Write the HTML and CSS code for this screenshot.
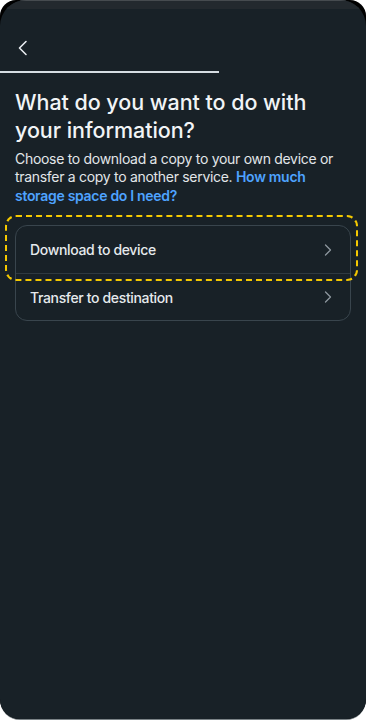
FILE: index.html
```html
<!DOCTYPE html>
<html lang="en">
<head>
<meta charset="utf-8">
<title>What do you want to do with your information?</title>
<link rel="stylesheet" href="styles.css">
</head>
<body>
<div class="phone">
  <div class="screen">
    <div class="statusbar"></div>
    <div class="topbar">
      <button class="back" aria-label="Back">
        <svg width="12" height="16" viewBox="0 0 12 16"><path d="M9 1.5 L2.5 8 L9 14.5" fill="none" stroke="#e8ecef" stroke-width="1.6" stroke-linecap="round" stroke-linejoin="round"/></svg>
      </button>
    </div>
    <div class="progress"></div>
    <main class="content">
      <h1 class="title">What do you want to do with your information?</h1>
      <p class="desc">Choose to download a copy to your own device or transfer a copy to another service. <a class="link" href="#">How much storage space do I need?</a></p>
      <div class="options-wrap">
        <div class="focus-ring"></div>
        <ul class="options">
          <li class="option">
            <span>Download to device</span>
            <svg class="chev" width="8" height="12" viewBox="0 0 8 12"><path d="M1.5 1 L6.5 6 L1.5 11" fill="none" stroke="#8d979e" stroke-width="1.3" stroke-linecap="round" stroke-linejoin="round"/></svg>
          </li>
          <li class="option">
            <span>Transfer to destination</span>
            <svg class="chev" width="8" height="12" viewBox="0 0 8 12"><path d="M1.5 1 L6.5 6 L1.5 11" fill="none" stroke="#8d979e" stroke-width="1.3" stroke-linecap="round" stroke-linejoin="round"/></svg>
          </li>
        </ul>
      </div>
    </main>
  </div>
</div>
</body>
</html>
```
FILE: styles.css
```css
* { box-sizing: border-box; }
html, body { margin: 0; padding: 0; background: #ffffff; }
body { width: 366px; height: 720px; overflow: hidden; font-family: Inter, "Noto Sans", sans-serif; }

.phone {
  width: 366px;
  height: 719px;
  background: #000;
  border-radius: 16px 16px 20px 20px;
  box-shadow: 0 1px 0 #7b8387;
}
.screen {
  height: 719px;
  background: #182127;
  border-radius: 26px 26px 20px 20px;
  overflow: hidden;
  display: flex;
  flex-direction: column;
}
.statusbar {
  height: 9px;
  flex: none;
  background: #23292e;
  border-top: 1px solid #464b4f;
}
.topbar {
  height: 62px;
  display: flex;
  align-items: center;
  padding-left: 16px;
  padding-top: 15px;
}
.back {
  background: none;
  border: 0;
  padding: 0;
  width: 14px;
  height: 16px;
  display: flex;
  align-items: center;
  justify-content: center;
}
.progress {
  width: 219px;
  height: 1.5px;
  background: #d5dde2;
  flex: none;
}
.content { padding: 15px 15px 0; }
.title {
  margin: 0;
  color: #f1f4f6;
  font-size: 21.5px;
  line-height: 28px;
  font-weight: 500;
  letter-spacing: -0.05px;
}
.desc {
  margin: 6px 0 0;
  color: #e2e6e9;
  font-size: 14px;
  line-height: 18.5px;
  font-weight: 400;
  letter-spacing: -0.3px;
}
.link { color: #4ea3ff; font-weight: 600; text-decoration: none; }

.options-wrap { position: relative; margin-top: 20px; }
.focus-ring {
  position: absolute;
  left: -10px;
  right: -7px;
  top: -10px;
  height: 66px;
  border: 2.5px dashed #f5c900;
  border-radius: 11px;
  pointer-events: none;
}
.options {
  list-style: none;
  margin: 0;
  padding: 0;
  border: 1px solid #39454d;
  border-radius: 12px;
}
.option {
  height: 47px;
  display: flex;
  align-items: center;
  justify-content: space-between;
  padding: 0 18px 0 14px;
  color: #e6eaed;
  font-size: 14px;
  font-weight: 500;
  letter-spacing: -0.35px;
}
.option + .option { border-top: 1px solid #2f3a41; }
.chev { flex: none; }
```
